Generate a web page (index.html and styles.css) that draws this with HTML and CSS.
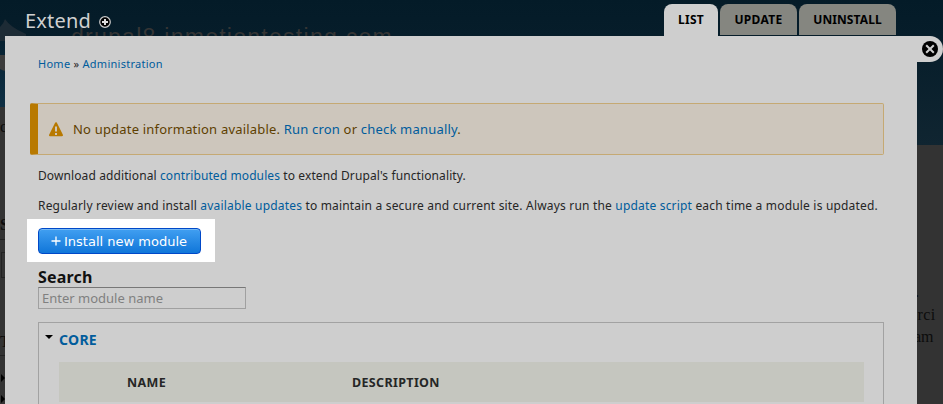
FILE: index.html
```
<!DOCTYPE html>
<html lang="en">
<head>
<meta charset="utf-8">
<title>Extend</title>
<link rel="stylesheet" href="styles.css">
</head>
<body>
<div class="site" aria-hidden="true">
  <div class="site-header">
    <i class="header-edge"></i><i class="content-edge"></i>
    <svg class="drop" width="40" height="94" viewBox="0 0 40 94"><path d="M0 8Q4 4 5 0Q10 8 26 15L26 22H0Z" fill="#1d2b35"/><path d="M0 36H6V52Q3 52 0 50Z" fill="#3c3c3c"/></svg>
    <span class="site-name">drupal8.inmotiontesting.com</span>
  </div>
  <span class="bit bit-c">c</span>
  <span class="bit bit-s">S</span>
  <i class="rule rule-a"></i><i class="ghost-input"></i>
  <span class="bit bit-t">T</span><i class="rule rule-b"></i>
  <i class="arrow arrow-a"></i><i class="arrow arrow-b"></i>
  <span class="bit bit-dot">.</span>
  <span class="bit bit-orci">orci</span>
  <span class="bit bit-am">am</span>
</div>
<div class="overlay">
  <header class="titlebar">
    <h1>Extend</h1>
    <svg class="add" width="12" height="12" viewBox="0 0 12 12"><circle cx="6" cy="6" r="5.3" fill="#000" stroke="#ccc" stroke-width="1.2"/><path d="M6 3v6M3 6h6" stroke="#ddd" stroke-width="2"/></svg>
    <nav class="tabs"><a class="active">LIST</a><a>UPDATE</a><a>UNINSTALL</a></nav>
  </header>
  <main class="panel">
    <div class="close"><svg width="16" height="16" viewBox="0 0 16 16"><circle cx="8" cy="8" r="8" fill="#000"/><path d="M4.2 4.2l7.6 7.6M11.8 4.2l-7.6 7.6" stroke="#cecece" stroke-width="2"/></svg></div>
    <div class="crumbs"><a>Home</a> » <a>Administration</a></div>
    <div class="warning">
      <svg width="14" height="15" viewBox="0 0 14 15"><path d="M7 1.2L13 13.2H1Z" fill="#b87900" stroke="#b87900" stroke-width="2" stroke-linejoin="round"/><path d="M7 4.5v5M7 11v2" stroke="#cdc6bc" stroke-width="2"/></svg>
      <span class="warning-text">No update information available. <a>Run cron</a> or <a>check manually</a>.</span>
    </div>
    <p class="p1">Download additional <a>contributed modules</a> to extend Drupal's functionality.</p>
    <p class="p2">Regularly review and install <a>available updates</a> to maintain a secure and current site. Always run the <a>update script</a> each time a module is updated.</p>
    <div class="spotlight"><button><svg width="10" height="10" viewBox="0 0 10 10"><path d="M5 .5v9M.5 5h9" stroke="#fff" stroke-width="1.3"/></svg><span>Install new module</span></button></div>
    <label for="q"><span>Search</span></label>
    <input id="q" placeholder="Enter module name">
    <section class="core">
      <div class="summary"><i></i><a>CORE</a></div>
      <div class="thead"><span class="c-name">NAME</span><span class="c-desc">DESCRIPTION</span></div>
    </section>
  </main>
</div>
</body>
</html>
```
FILE: styles.css
```
* { box-sizing: border-box; }
body { margin: 0; width: 943px; height: 404px; overflow: hidden; position: relative; background: #333; font-family: "Noto Sans", sans-serif; color: #262626; }
a { color: #005c9c; }
.site { position: absolute; inset: 0; overflow: hidden; font-family: "Liberation Serif", serif; color: #0c0c0c; }
.site-header { height: 145px; background: linear-gradient(#041b28, #061d2a 36px, #102531); }
.header-edge { position: absolute; left: 0; top: 36px; width: 5px; height: 71px; background: linear-gradient(#06202f, #0e2f44); }
.content-edge { position: absolute; left: 0; top: 107px; width: 5px; height: 38px; background: #333; }
.drop { position: absolute; left: 0; top: 19px; }
.site-name { position: absolute; left: 71px; top: 25px; font: 23px/25px "Liberation Sans", sans-serif; letter-spacing: 1.27px; color: #353535; }
.bit { position: absolute; font-size: 16px; line-height: 20px; }
.bit-c { left: 0; top: 117px; }
.bit-s { left: 0; top: 215px; font-weight: bold; }
.bit-t { left: 0; top: 332px; }
.bit-dot { left: 915px; top: 282px; }
.bit-orci { left: 909px; top: 305px; letter-spacing: 0.4px; }
.bit-am { left: 914px; top: 327px; }
.rule { position: absolute; left: 0; width: 8px; height: 1px; background: #222; }
.rule-a { top: 239px; }
.rule-b { top: 355px; }
.ghost-input { position: absolute; left: 1px; top: 252px; width: 20px; height: 26px; border: 1px solid #222; }
.arrow { position: absolute; left: 1px; border: 4px solid transparent; border-left-color: #000; border-right: 0; }
.arrow-a { top: 374px; }
.arrow-b { top: 395px; }
.overlay { position: relative; width: 912px; margin-left: 5px; }
.titlebar { height: 36px; display: flex; padding-left: 20px; }
h1 { margin: 0; font-size: 20px; line-height: 24px; padding-top: 9px; font-weight: 400; color: #d0d0d0; letter-spacing: 0.2px; }
.add { margin: 16px 0 0 8px; }
.tabs { margin: 4px 21px 0 auto; display: flex; gap: 2px; }
.tabs a { height: 31px; display: flex; justify-content: center; width: 77px; border-radius: 8px 8px 0 0; background: #858680; color: #000; font-size: 12px; line-height: 32px; font-weight: 700; letter-spacing: 0.3px; }
.tabs a.active { width: 54px; height: 32px; background: #cecece; }
.tabs a:last-child { width: 97px; letter-spacing: 0.1px; }
.panel { position: relative; height: 368px; background: #cecece; padding: 19px 33px 0; }
.close { position: absolute; right: -26px; top: 0; width: 30px; height: 26px; border-radius: 0 13px 13px 0; background: #cecece; padding: 5px 0 0 9px; }
.close svg { display: block; }
.crumbs { font-size: 11px; line-height: 18px; letter-spacing: 0.27px; }
.warning { margin: 30px 0 0 -8px; height: 52px; width: 854px; border: 1px solid #c5a973; border-left: 8px solid #b87900; border-radius: 2px; background: #cdc6bc; display: flex; align-items: center; gap: 10px; padding-left: 11px; font-size: 13px; letter-spacing: 0.19px; color: #5e3f00; white-space: nowrap; }
.panel p { margin: 0; font-size: 12px; line-height: 18px; white-space: nowrap; }
.panel .p1 { margin-top: 12px; letter-spacing: 0.105px; }
.panel .p2 { margin-top: 12px; letter-spacing: 0.185px; }
.spotlight { margin: 4px 0 0 -11px; width: 188px; height: 43px; background: #fff; padding: 9px 11px; }
button { display: flex; align-items: center; width: 163px; height: 26px; padding: 0 0 0 12px; gap: 3px; border: 1px solid #0048c8; border-radius: 4px; background: linear-gradient(#419ff1, #1076d9); box-shadow: inset 0 1px #75b9f4; color: #fff; font: 13px/20px "DejaVu Sans", sans-serif; white-space: nowrap; }
button span { padding-top: 1px; }
label { display: block; margin-top: 6px; font-size: 16px; line-height: 19px; height: 19px; font-weight: 700; letter-spacing: 0.2px; color: #111; }
input { display: block; width: 208px; height: 22px; border: 1px solid #a0a0a0; border-top-color: #777; background: #cecece; padding: 0 3px; font: 13px/20px "Noto Sans", sans-serif; }
input::placeholder { color: #808080; opacity: 1; }
.core { margin-top: 13px; width: 846px; height: 90px; border: 1px solid #a2a2a2; border-bottom: 0; padding: 6px 19px 0 6px; }
.summary { display: flex; align-items: center; height: 20px; font-size: 14px; font-weight: 700; letter-spacing: 0.3px; }
.summary i { border: 4px solid transparent; border-top-color: #000; border-bottom: 0; margin: -4px 6px 0 0; width: 8px; height: 4px; }
.thead { margin: 13px 0 0 14px; height: 40px; background: #c5c6bf; display: flex; line-height: 41px; font-size: 12.5px; font-weight: 700; letter-spacing: 0.35px; }
.c-name { width: 225px; margin-left: 68px; }
```
